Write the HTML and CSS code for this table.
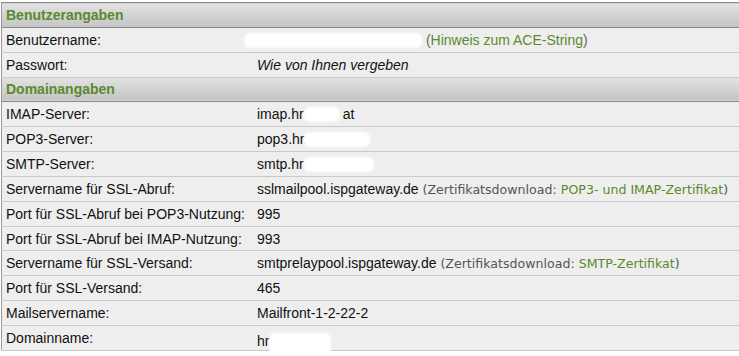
FILE: index.html
```html
<!DOCTYPE html>
<html lang="de">
<head>
  <meta charset="UTF-8" />
  <title>Zugangsdaten</title>
  <meta name="viewport" content="width=device-width, initial-scale=1" />
  <link rel="stylesheet" href="styles.css">
</head>
<body>
  <table class="daten">
    <tr class="kopf"><th colspan="2">Benutzerangaben</th></tr>
    <tr>
      <td class="label">Benutzername:</td>
      <td><span class="verdeckt v-user"></span> <span class="hinweis">(<a href="#">Hinweis zum ACE-String</a>)</span></td>
    </tr>
    <tr>
      <td class="label">Passwort:</td>
      <td><em>Wie von Ihnen vergeben</em></td>
    </tr>

    <tr class="kopf"><th colspan="2">Domainangaben</th></tr>
    <tr>
      <td class="label">IMAP-Server:</td>
      <td>imap.hr<span class="verdeckt v-imap"></span>at</td>
    </tr>
    <tr>
      <td class="label">POP3-Server:</td>
      <td>pop3.hr<span class="verdeckt v-pop"></span></td>
    </tr>
    <tr>
      <td class="label">SMTP-Server:</td>
      <td>smtp.hr<span class="verdeckt v-smtp"></span></td>
    </tr>
    <tr>
      <td class="label">Servername für SSL-Abruf:</td>
      <td>sslmailpool.ispgateway.de <span class="zusatz">(Zertifikatsdownload: <a href="#">POP3- und IMAP-Zertifikat</a>)</span></td>
    </tr>
    <tr>
      <td class="label">Port für SSL-Abruf bei POP3-Nutzung:</td>
      <td>995</td>
    </tr>
    <tr>
      <td class="label">Port für SSL-Abruf bei IMAP-Nutzung:</td>
      <td>993</td>
    </tr>
    <tr>
      <td class="label">Servername für SSL-Versand:</td>
      <td>smtprelaypool.ispgateway.de <span class="zusatz">(Zertifikatsdownload: <a href="#">SMTP-Zertifikat</a>)</span></td>
    </tr>
    <tr>
      <td class="label">Port für SSL-Versand:</td>
      <td>465</td>
    </tr>
    <tr>
      <td class="label">Mailservername:</td>
      <td>Mailfront-1-2-22-2</td>
    </tr>
    <tr>
      <td class="label">Domainname:</td>
      <td>hr<span class="verdeckt v-domain"></span></td>
    </tr>
  </table>
</body>
</html>
```

FILE: styles.css
```css
body {
  margin: 0;
  padding: 2px 0 0 1px;
  background: #fff;
  font-family: 'Liberation Sans', Arial, sans-serif;
  font-size: 14px;
  color: #111;
  overflow: hidden;
}
.daten {
  width: 100%;
  border-collapse: collapse;
  border-left: 1px solid #9a9a9a;
  border-bottom: 1px solid #8a8a8a;
  background: #eeeeee;
}
.daten td,
.daten th {
  height: 23.85px;
  padding: 0 4px;
  text-align: left;
  vertical-align: middle;
  white-space: nowrap;
  border-bottom: 1px solid #c9c9c9;
}
.daten .label {
  width: 243px;
}
.kopf th {
  background: linear-gradient(#e2e2e2, #c4c4c4);
  border-top: 1px solid #888;
  border-bottom: 1px solid #888;
  color: #5b8a2c;
  font-weight: bold;
}
em {
  font-style: italic;
}
a {
  color: #5b8a2c;
  text-decoration: none;
}
.hinweis {
  color: #666;
}
.zusatz {
  font-family: 'DejaVu Sans', Verdana, sans-serif;
  font-size: 12.6px;
  color: #555;
}

/* geschwärzte Stellen */
.verdeckt {
  display: inline-block;
  position: relative;
  height: 15px;
  vertical-align: -3px;
  background: #fff;
  border-radius: 6px;
  filter: blur(1px);
}
.v-user {
  width: 178px;
  margin-left: -13px;
}
.v-imap {
  width: 36px;
  margin-right: 3px;
}
.v-pop {
  width: 66px;
}
.v-smtp {
  width: 70px;
}
.v-domain {
  width: 62px;
  height: 22px;
  top: 6px;
}
```
